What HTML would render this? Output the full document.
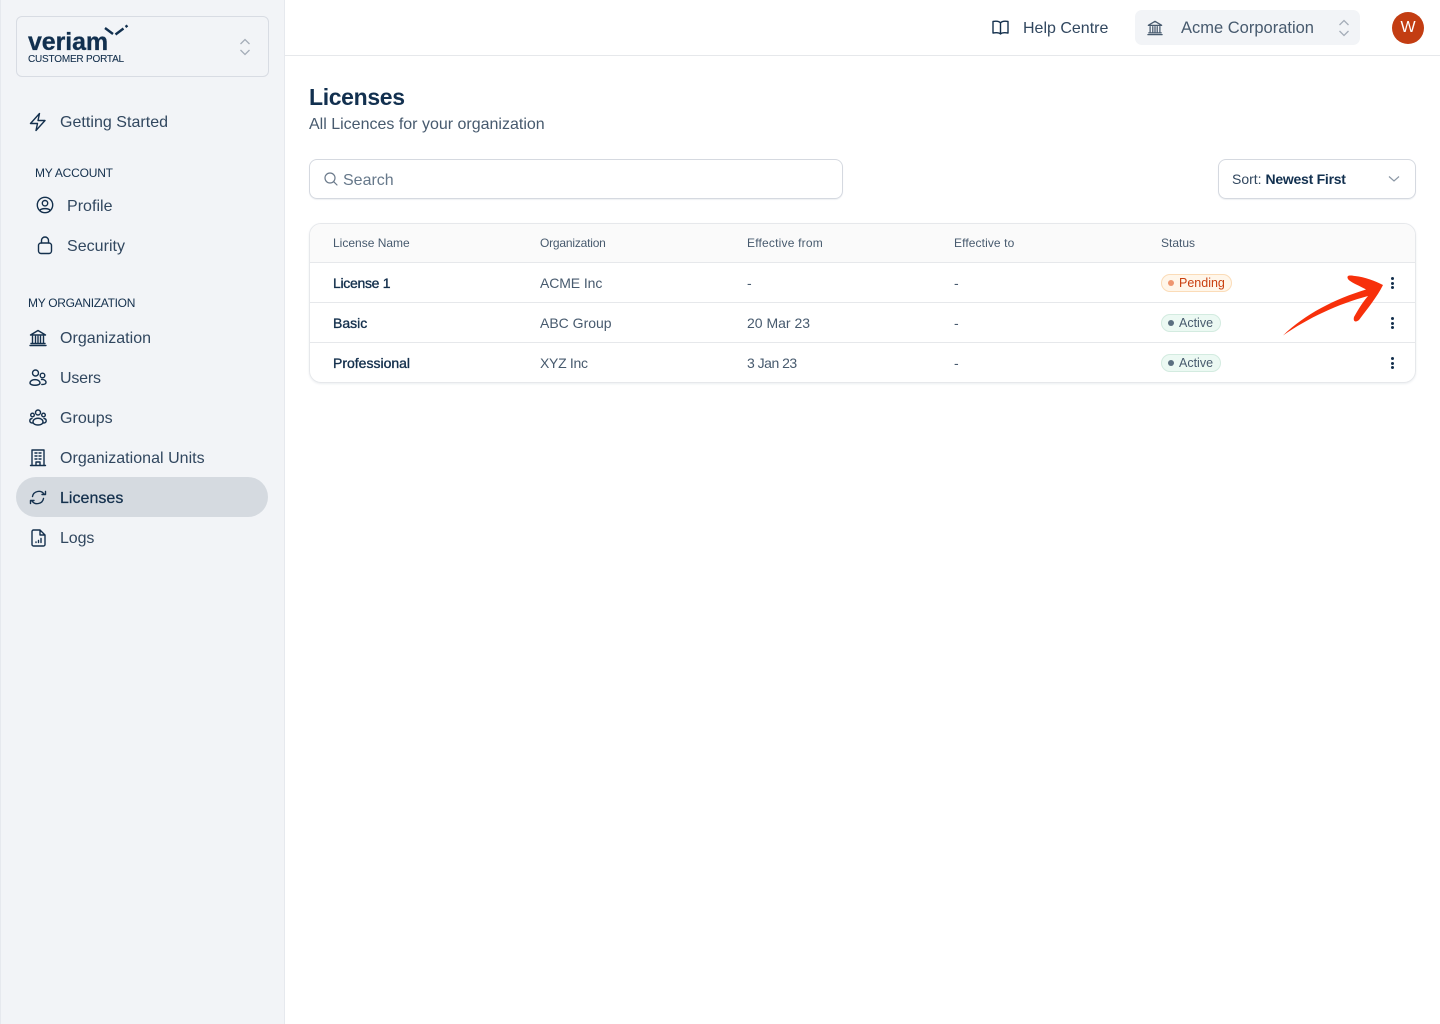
<!DOCTYPE html>
<html lang="en"><head><meta charset="utf-8"><title>Licenses</title>
<style>
html,body{margin:0;padding:0;background:#fff}
body{width:1440px;height:1024px;position:relative;overflow:hidden;font-family:"Liberation Sans",sans-serif;color:#0f2b46}
.a{position:absolute;white-space:nowrap}
.t{position:absolute;white-space:nowrap;line-height:20px;height:20px}
svg{position:absolute;overflow:visible}
.i{fill:none;stroke:#14304d;stroke-width:1.4;stroke-linecap:round;stroke-linejoin:round}
.nav{font-size:16px;color:#31475f;left:60px;letter-spacing:.03px}
.sec{font-size:12px;color:#14304d}
.th{font-size:12px;color:#475a6e}
.td{font-size:14px;color:#475a6e}
.b{color:#14304d;font-size:14px;-webkit-text-stroke:.35px #14304d}
.dot{position:absolute;width:3px;height:3px;border-radius:50%;background:#14304d;left:1391px}
.pill{position:absolute;height:15px;border-radius:9px;box-sizing:border-box}
.line{position:absolute;left:310px;width:1105px;height:1px;background:#e6e8eb}
</style></head><body>
<div class="a" style="left:0;top:0;width:285px;height:1024px;background:#f2f4f7;border-right:1px solid #e6e9ee;border-left:1px solid #e6e9ee;box-sizing:border-box"></div>
<div class="a" style="left:285px;top:55px;width:1155px;height:1px;background:#e6e8eb"></div>

<div class="a" style="left:16px;top:16px;width:253px;height:61px;border:1px solid #d8dce3;border-radius:6px;box-sizing:border-box"></div>
<div class="a" style="left:28px;top:28px;font-size:25px;line-height:28px;font-weight:bold;color:#12304f;letter-spacing:-.1px;-webkit-text-stroke:.3px #12304f">veriam</div>
<svg style="left:104px;top:24px" width="26" height="14"><path d="M1 4L9 10M11.500 10.500L19.500 4.500" fill="none" stroke="#12304f" stroke-width="2.400"/><path d="M21.500 3L23.500 1.500" fill="none" stroke="#12304f" stroke-width="2.400"/></svg>
<div class="t" style="left:28px;top:50px;font-size:10px;color:#14304d;letter-spacing:-.2px;-webkit-text-stroke:.1px #14304d">CUSTOMER PORTAL</div>
<svg style="left:239px;top:38px" width="12" height="18"><path d="M1.500 6L6 1.500L10.500 6M1.500 12L6 16.500L10.500 12" fill="none" stroke="#a5adb8" stroke-width="1.300"/></svg>

<svg class="i" style="left:29px;top:112px" width="18" height="20" viewBox="0 0 18 20"><path d="M10.500 1.500L1.500 11.500H8.500L7 18.500L16 8.500H9Z"/></svg>
<div class="t nav" style="top:113px">Getting Started</div>
<div class="t sec" style="left:35px;top:163px;letter-spacing:-.2px">MY ACCOUNT</div>
<svg class="i" style="left:36px;top:196px" width="18" height="18" viewBox="0 0 18 18"><circle cx="9" cy="9" r="7.700"/><circle cx="9" cy="7.200" r="2.700"/><path d="M3.800 14.500C5 12 13 12 14.200 14.500"/></svg>
<div class="t nav" style="left:67px;top:197px">Profile</div>
<svg class="i" style="left:37px;top:236px" width="16" height="19" viewBox="0 0 16 19"><rect x="1.500" y="7" width="13" height="10.500" rx="2.500"/><path d="M4.500 7V4.500A3.500 3.500 0 0 1 11.500 4.500V7"/></svg>
<div class="t nav" style="left:67px;top:237px">Security</div>
<div class="t sec" style="left:28px;top:293px;letter-spacing:-.3px">MY ORGANIZATION</div>

<svg class="i" style="left:29px;top:329px" width="18" height="18" viewBox="0 0 18 18" stroke-width="1.100"><path d="M1.500 6L9 1.500L16.500 6ZM1 16.500H17M2 14.500H16M3.500 7.500V13.500M6.500 7.500V13.500M9 7.500V13.500M11.500 7.500V13.500M14.500 7.500V13.500"/></svg>
<div class="t nav" style="top:329px">Organization</div>
<svg class="i" style="left:29px;top:369px" width="18" height="18" viewBox="0 0 18 18" stroke-width="1.300"><circle cx="6.500" cy="4" r="3"/><circle cx="13.500" cy="6.500" r="2.300"/><path d="M1 14C1 9.500 11 9.500 11 14C11 17 1 17 1 14ZM12.500 10.500C15.500 10.300 17 11.800 17 13.500C17 15 15 15.500 12.800 15.500"/></svg>
<div class="t nav" style="top:369px;letter-spacing:-.2px">Users</div>
<svg class="i" style="left:29px;top:409px" width="18" height="18" viewBox="0 0 18 18" stroke-width="1.200"><circle cx="9" cy="3.500" r="2.500"/><circle cx="3.500" cy="6" r="1.800"/><circle cx="14.500" cy="6" r="1.800"/><path d="M4 13C4 8 14 8 14 13C14 17 4 17 4 13ZM3 9.500C0 10 0 14 3.500 14M15 9.500C18 10 18 14 14.500 14"/></svg>
<div class="t nav" style="top:409px">Groups</div>
<svg class="i" style="left:30px;top:449px" width="16" height="18" viewBox="0 0 16 18" stroke-width="1.200"><path d="M2 16.500V1H14V16.500M0.500 16.500H15.500M6 16.500V13H10V16.500M5 4H7M9 4H11M5 7H7M9 7H11M5 10H7M9 10H11"/></svg>
<div class="t nav" style="top:449px">Organizational Units</div>

<div class="a" style="left:16px;top:477px;width:252px;height:40px;border-radius:20px;background:#d5dae0"></div>
<svg class="i" style="left:29px;top:489px" width="18" height="17" viewBox="0 0 18 17"><path d="M3.500 7.500C4.500 2 12 0.500 15 5M14.500 9.500C13.500 15 6 16.500 3 12M13 5.500H16.500V2.500M5 11.500H1.500V14.500"/></svg>
<div class="t nav" style="top:489px;color:#14304d;-webkit-text-stroke:.25px #14304d">Licenses</div>
<svg class="i" style="left:31px;top:529px" width="15" height="18" viewBox="0 0 15 18"><path d="M1 2.500A1.500 1.500 0 0 1 2.500 1H9L14 6V15.500A1.500 1.500 0 0 1 12.500 17H2.500A1.500 1.500 0 0 1 1 15.500ZM9 1V6H14M5 13.500V13M7.500 13.500V11.500M10 13.500V9.500"/></svg>
<div class="t nav" style="top:529px;letter-spacing:-.1px">Logs</div>

<svg class="i" style="left:992px;top:20px" width="17" height="15" viewBox="0 0 17 15"><path d="M8.500 3C7 1 4 1 1 1.500V13C4 12.500 7 12.500 8.500 14C10 12.500 13 12.500 16 13V1.500C13 1 10 1 8.500 3ZM8.500 3V14"/></svg>
<div class="t" style="left:1023px;top:19px;font-size:16px;color:#31475f">Help Centre</div>
<div class="a" style="left:1135px;top:10px;width:225px;height:35px;border-radius:7px;background:#f2f4f7"></div>
<svg class="i" style="left:1147px;top:20px;stroke:#475a6e" width="16" height="16" viewBox="0 0 18 18" stroke-width="1.100"><path d="M1.500 6L9 1.500L16.500 6ZM1 16.500H17M2 14.500H16M3.500 7.500V13.500M6.500 7.500V13.500M9 7.500V13.500M11.500 7.500V13.500M14.500 7.500V13.500"/></svg>
<div class="t" style="left:1181px;top:18px;font-size:16.500px;color:#475a6e">Acme Corporation</div>
<svg style="left:1338px;top:19px" width="12" height="18"><path d="M1.500 6L6 1.500L10.500 6M1.500 12L6 16.500L10.500 12" fill="none" stroke="#a5adb8" stroke-width="1.300"/></svg>
<div class="a" style="left:1392px;top:12px;width:32px;height:32px;border-radius:50%;background:#c33d12;color:#fff;font-size:16px;line-height:32px;text-align:center">W</div>

<div class="t" style="left:309px;top:84px;font-size:23px;line-height:26px;height:26px;font-weight:bold;color:#12304f;letter-spacing:-.35px">Licenses</div>
<div class="t" style="left:309px;top:115px;font-size:16px;color:#475a6e">All Licences for your organization</div>

<div class="a" style="left:309px;top:159px;width:534px;height:40px;border:1px solid #d5d9e0;border-radius:8px;box-sizing:border-box;box-shadow:0 1px 1px #eef0f3"></div>
<svg style="left:324px;top:172px" width="14" height="14"><circle cx="6" cy="6" r="5" fill="none" stroke="#6b7a8b" stroke-width="1.200"/><path d="M9.700 9.700L13 13" stroke="#6b7a8b" stroke-width="1.200" stroke-linecap="round"/></svg>
<div class="t" style="left:343px;top:171px;font-size:16px;color:#66788a">Search</div>

<div class="a" style="left:1218px;top:159px;width:198px;height:40px;border:1px solid #d5d9e0;border-radius:8px;box-sizing:border-box;box-shadow:0 1px 1px #eef0f3"></div>
<div class="t" style="left:1232px;top:169px;font-size:14px;color:#31475f">Sort: <b style="color:#12304f;letter-spacing:-.25px">Newest First</b></div>
<svg style="left:1388px;top:175px" width="12" height="8"><path d="M1 1.500L6 6L11 1.500" fill="none" stroke="#8b97a5" stroke-width="1.200"/></svg>

<div class="a" style="left:309px;top:223px;width:1107px;height:160px;border:1px solid #e6e8eb;border-radius:12px;box-sizing:border-box;box-shadow:0 1px 2px #eceef1;overflow:hidden"><div style="height:38px;background:#fafafa"></div></div>
<div class="line" style="top:262px"></div>
<div class="line" style="top:302px"></div>
<div class="line" style="top:342px"></div>

<div class="t th" style="left:333px;top:233px">License Name</div>
<div class="t th" style="left:540px;top:233px;letter-spacing:-.2px">Organization</div>
<div class="t th" style="left:747px;top:233px;letter-spacing:.2px">Effective from</div>
<div class="t th" style="left:954px;top:233px;letter-spacing:.1px">Effective to</div>
<div class="t th" style="left:1161px;top:233px">Status</div>

<div class="t b" style="left:333px;top:273px;letter-spacing:-.3px">License 1</div>
<div class="t td" style="left:540px;top:273px;letter-spacing:-.1px">ACME Inc</div>
<div class="t td" style="left:747px;top:273px">-</div>
<div class="t td" style="left:954px;top:273px">-</div>
<div class="t b" style="left:333px;top:313px">Basic</div>
<div class="t td" style="left:540px;top:313px">ABC Group</div>
<div class="t td" style="left:747px;top:313px">20 Mar 23</div>
<div class="t td" style="left:954px;top:313px">-</div>
<div class="t b" style="left:333px;top:353px">Professional</div>
<div class="t td" style="left:540px;top:353px;letter-spacing:-.3px">XYZ Inc</div>
<div class="t td" style="left:747px;top:353px;letter-spacing:-.5px">3 Jan 23</div>
<div class="t td" style="left:954px;top:353px">-</div>

<div class="pill" style="left:1161px;top:274px;width:71px;height:18px;background:#fff6ea;border:1px solid #fbdcb8"></div>
<div class="a" style="left:1168px;top:280px;width:6px;height:6px;border-radius:50%;background:#ee9670"></div>
<div class="t" style="left:1179px;top:273px;font-size:12.500px;color:#c93f10">Pending</div>
<div class="pill" style="left:1161px;top:314px;width:60px;height:18px;background:#ecf9f3;border:1px solid #d3ebe0"></div>
<div class="a" style="left:1168px;top:320px;width:6px;height:6px;border-radius:50%;background:#5b6f80"></div>
<div class="t" style="left:1179px;top:313px;font-size:12.500px;color:#475a6e">Active</div>
<div class="pill" style="left:1161px;top:354px;width:60px;height:18px;background:#ecf9f3;border:1px solid #d3ebe0"></div>
<div class="a" style="left:1168px;top:360px;width:6px;height:6px;border-radius:50%;background:#5b6f80"></div>
<div class="t" style="left:1179px;top:353px;font-size:12.500px;color:#475a6e">Active</div>

<div class="dot" style="top:277px"></div><div class="dot" style="top:281.500px"></div><div class="dot" style="top:286px"></div>
<div class="dot" style="top:317px"></div><div class="dot" style="top:321.500px"></div><div class="dot" style="top:326px"></div>
<div class="dot" style="top:357px"></div><div class="dot" style="top:361.500px"></div><div class="dot" style="top:366px"></div>

<svg style="left:1280px;top:270px" width="105" height="70" viewBox="0 0 105 70"><path d="M3 65.500C25 44 55 29 86 19.500C78 15 70 12 68 9C66 5 70 5 75 6C85 7 95 11 103 15C97 27 88 38 79 50C75 53 73 51 74 47C78 40 82 33 88 26C58 34 28 48 3 65.500Z" fill="#f7300b"/></svg>
</body></html>
